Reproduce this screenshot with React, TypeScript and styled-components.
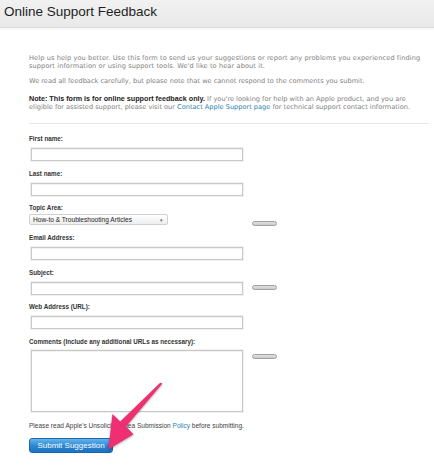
import React from "react";
import styled, { createGlobalStyle } from "styled-components";

const GlobalStyle = createGlobalStyle`
    html, body {
        margin: 0;
        padding: 0;
        background: #ffffff;
    }
    body {
        font-family: "Liberation Sans", Arial, sans-serif;
    }
`;

type FieldDef = {
    label: string,
    kind: 'input' | 'select' | 'textarea',
    pill?: boolean,
};

const fields: FieldDef[] = [
    {label: 'First name:', kind: 'input'},
    {label: 'Last name:', kind: 'input'},
    {label: 'Topic Area:', kind: 'select', pill: true},
    {label: 'Email Address:', kind: 'input'},
    {label: 'Subject:', kind: 'input', pill: true},
    {label: 'Web Address (URL):', kind: 'input'},
    {label: 'Comments (Include any additional URLs as necessary):', kind: 'textarea', pill: true},
];

const PointerArrow: React.FC = () => (
    <ArrowSvg width="70" height="78" viewBox="0 0 70 78">
        <path
            d="M59.4,5.4 Q60.9,3.9 62.2,5.8 L26,48.6 L33.5,56.2 L8.3,71.5 L12.5,36 L20.3,43.5 Z"
            fill="#ee2f71"
        />
    </ArrowSvg>
);

const App: React.FC = () => {
    const renderControl = (field: FieldDef) => {
        if (field.kind === 'select') {
            return (
                <SelectBox>
                    <span>How-to &amp; Troubleshooting Articles</span>
                    <span className="caret">▾</span>
                </SelectBox>
            );
        }
        if (field.kind === 'textarea') {
            return <TextBox $tall/>;
        }
        return <TextBox/>;
    };

    return (
        <Page>
            <GlobalStyle/>
            <Header>
                <Title>Online Support Feedback</Title>
            </Header>
            <Content>
                <Intro $wide>
                    Help us help you better. Use this form to send us your suggestions or report any problems you experienced finding<br/>
                    support information or using support tools. We'd like to hear about it.
                </Intro>
                <Intro $gap={7}>
                    We read all feedback carefully, but please note that we cannot respond to the comments you submit.
                </Intro>
                <Intro $gap={10}>
                    <strong>Note: This form is for online support feedback only.</strong>{' '}
                    If you're looking for help with an Apple product, and you are<br/>
                    eligible for assisted support, please visit our <Link>Contact Apple Support page</Link> for technical support contact information.
                </Intro>
                <Divider/>
                <Form>
                    {fields.map((field) => (
                        <FieldRow key={field.label}>
                            <FieldMain>
                                <Label $tight={field.kind === 'select'} $comment={field.kind === 'textarea'}>
                                    {field.label}
                                </Label>
                                {renderControl(field)}
                            </FieldMain>
                            {field.pill && <Pill/>}
                        </FieldRow>
                    ))}
                </Form>
                <PolicyNote>
                    Please read Apple's Unsolicited Idea Submission <Link>Policy</Link> before submitting.
                </PolicyNote>
                <SubmitButton type="button">Submit Suggestion</SubmitButton>
            </Content>
            <PointerArrow/>
        </Page>
    );
};

export default App;



const Page = styled.div`
    position: relative;
    width: 434px;
    min-height: 465px;
    overflow: hidden;
    background: #ffffff;
`;

const Header = styled.div`
    height: 28px;
    box-sizing: border-box;
    padding: 2px 4px 0;
    background: linear-gradient(#f1f1f1, #e9e9e9);
    border-bottom: 1px solid #dcdcdc;
    box-shadow: 0 1px 2px rgba(0, 0, 0, 0.06);
`;

const Title = styled.h1`
    margin: 0;
    font-size: 13.5px;
    line-height: 20px;
    font-weight: normal;
    color: #1e1e1e;
`;

const Content = styled.div`
    padding: 26px 6px 0 29px;
`;

const Intro = styled.p<{ $gap?: number, $wide?: boolean }>`
    margin: ${p => p.$gap || 0}px 0 0;
    white-space: nowrap;
    font-family: "DejaVu Sans", "Liberation Sans", sans-serif;
    font-size: 6.6px;
    line-height: 8px;
    letter-spacing: ${p => p.$wide ? 0.1 : 0}px;
    color: #808080;

    & strong {
        font-family: "Liberation Sans", Arial, sans-serif;
        font-size: 7.2px;
        color: #222222;
    }
`;

const Link = styled.span`
    color: #2a7fad;
`;

const Divider = styled.div`
    margin: 12px 0 11px;
    border-top: 1px solid #e6e6e6;
`;

const Form = styled.div`
    display: flex;
    flex-direction: column;
`;

const FieldRow = styled.div`
    display: grid;
    grid-template-columns: 223px 25px;
    margin-bottom: 8.5px;
`;

const FieldMain = styled.div`
    display: flex;
    flex-direction: column;
`;

const Label = styled.div<{ $tight?: boolean, $comment?: boolean }>`
    font-size: 6.3px;
    line-height: 8px;
    font-weight: bold;
    color: #333333;
    margin-bottom: ${p => p.$tight ? 2 : (p.$comment ? 4 : 5)}px;
`;

const TextBox = styled.div<{ $tall?: boolean }>`
    margin-left: 2px;
    width: 212px;
    height: ${p => p.$tall ? 62 : 13}px;
    box-sizing: border-box;
    border: 1px solid #c9c9c9;
    background: #ffffff;
    box-shadow: 0 0 0 1px #f0f0f0, inset 0 1px 1px rgba(0, 0, 0, 0.06);
`;

const SelectBox = styled.div`
    display: flex;
    align-items: center;
    justify-content: space-between;
    width: 139px;
    height: 11px;
    box-sizing: border-box;
    padding: 0 4px 0 3px;
    border: 1px solid #d0d0d0;
    border-radius: 2px;
    background: linear-gradient(#ffffff, #ededed);
    font-size: 6.6px;
    color: #222222;

    & .caret {
        font-size: 5px;
        color: #666666;
    }
`;

const Pill = styled.div`
    align-self: start;
    margin-top: 16.5px;
    width: 25px;
    height: 5px;
    box-sizing: border-box;
    border: 1px solid #a0a0a0;
    border-radius: 3px;
    background: linear-gradient(#e2e2e2, #c9c9c9);
`;

const PolicyNote = styled.div`
    margin-top: 1.5px;
    font-size: 6.55px;
    line-height: 8px;
    color: #444444;
`;

const SubmitButton = styled.button`
    display: block;
    margin-top: 8px;
    width: 84px;
    height: 15px;
    padding: 0;
    border: 1px solid #1c66ab;
    border-radius: 3px;
    background: linear-gradient(#62b4ec, #2a86d2 55%, #1c72c2);
    color: #ffffff;
    font-family: "Liberation Sans", Arial, sans-serif;
    font-size: 8px;
    line-height: 13px;
`;

const ArrowSvg = styled.svg`
    position: absolute;
    left: 100px;
    top: 378px;
    filter: drop-shadow(0.5px 1px 0.8px rgba(0, 0, 0, 0.35));
`;
